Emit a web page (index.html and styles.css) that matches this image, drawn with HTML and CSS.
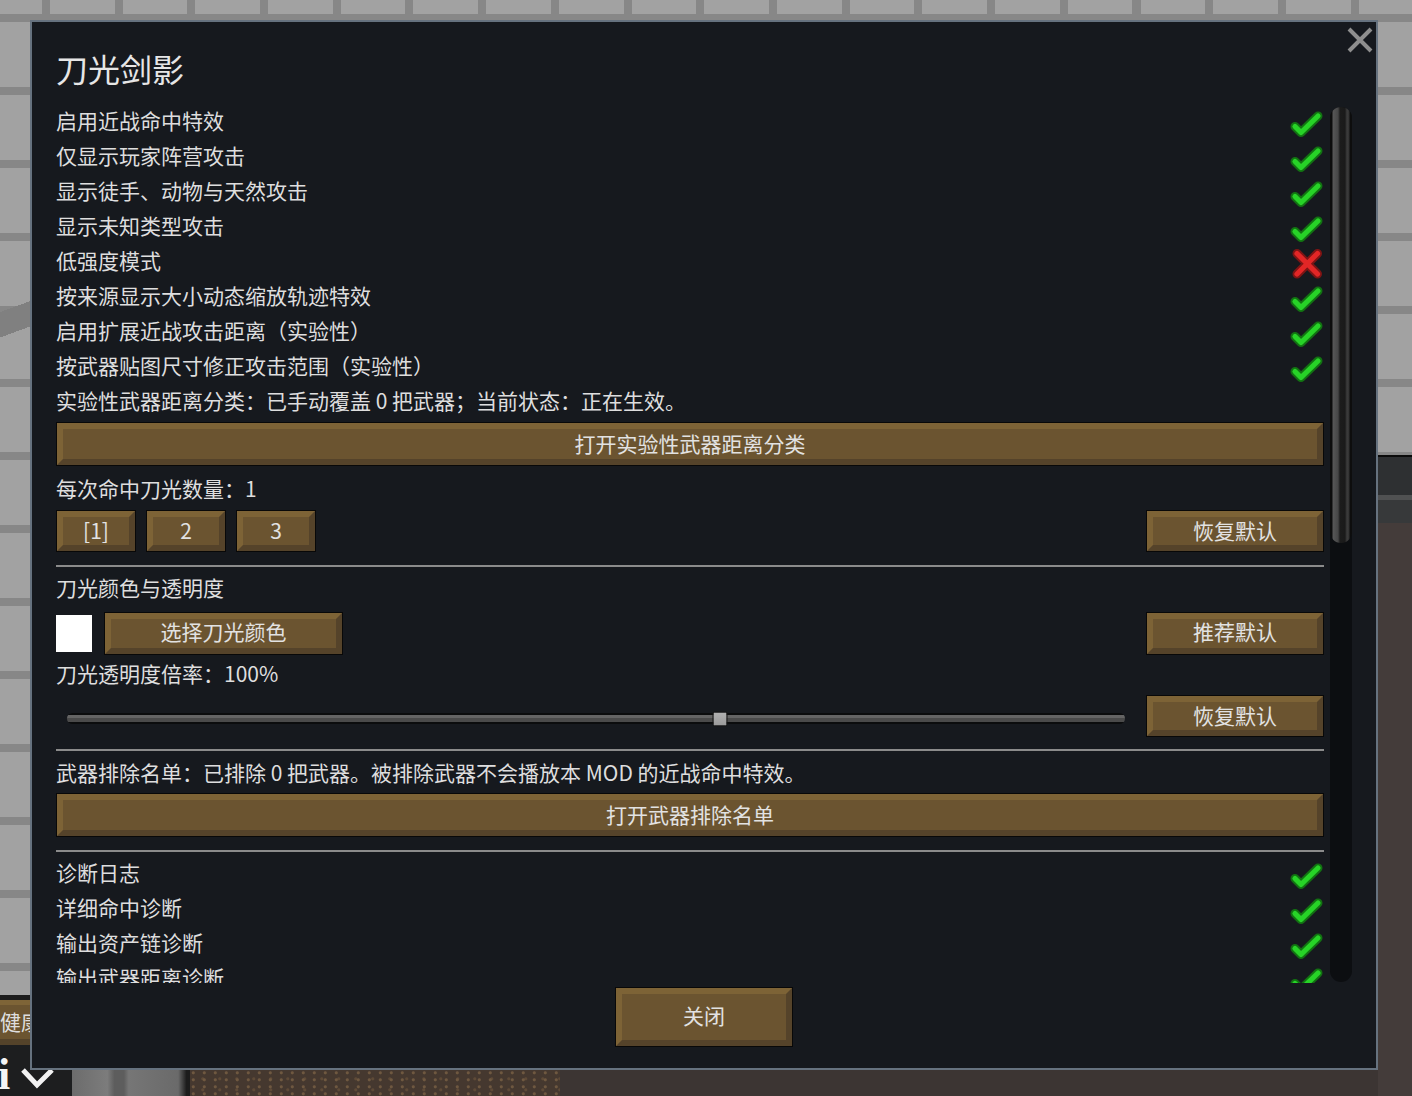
FILE: index.html
```html
<!DOCTYPE html>
<html lang="zh-CN">
<head>
<meta charset="utf-8">
<title>刀光剑影</title>
<link rel="stylesheet" href="styles.css">
</head>
<body>
<svg class="defs" width="0" height="0" aria-hidden="true">
  <defs>
    <symbol id="ico-check" viewBox="0 0 34 34">
      <polyline points="5,20.5 11,26.5 28,10" fill="none" stroke="#127212" stroke-width="9" stroke-linecap="round" stroke-linejoin="round"/>
      <polyline points="5,20.5 11,26.5 28,10" fill="none" stroke="#27d327" stroke-width="5.2" stroke-linecap="round" stroke-linejoin="round"/>
    </symbol>
    <symbol id="ico-cross" viewBox="0 0 34 34">
      <path d="M7 7.5 L27.5 28 M27.5 7.5 L7 28" fill="none" stroke="#7e1414" stroke-width="9" stroke-linecap="round"/>
      <path d="M7 7.5 L27.5 28 M27.5 7.5 L7 28" fill="none" stroke="#e22626" stroke-width="5.2" stroke-linecap="round"/>
    </symbol>
  </defs>
</svg>

<div class="scene">
  <div class="scene-shade"></div>
  <div class="scene-right"></div>
  <div class="scene-health">健康</div>
  <div class="scene-corner">
    <span class="scene-i">i</span>
    <svg class="scene-chevron" viewBox="0 0 36 22"><polyline points="3,2 17,17 32,2" fill="none" stroke="#f2f2f2" stroke-width="5"/></svg>
  </div>
  <div class="scene-floor-gray"></div>
  <div class="scene-floor-brown"></div>
  <div class="scene-floor-dark"></div>
</div>

<div class="window">
  <svg class="close-x" viewBox="0 0 26 26"><path d="M2 2 L24 24 M24 2 L2 24" fill="none" stroke="#8e8e8e" stroke-width="4"/></svg>
  <h1 class="title">刀光剑影</h1>
  <div class="scroll">
    <div class="content">
      <div class="row"><span>启用近战命中特效</span><svg class="mark"><use href="#ico-check"/></svg></div>
      <div class="row"><span>仅显示玩家阵营攻击</span><svg class="mark"><use href="#ico-check"/></svg></div>
      <div class="row"><span>显示徒手、动物与天然攻击</span><svg class="mark"><use href="#ico-check"/></svg></div>
      <div class="row"><span>显示未知类型攻击</span><svg class="mark"><use href="#ico-check"/></svg></div>
      <div class="row"><span>低强度模式</span><svg class="mark"><use href="#ico-cross"/></svg></div>
      <div class="row"><span>按来源显示大小动态缩放轨迹特效</span><svg class="mark"><use href="#ico-check"/></svg></div>
      <div class="row"><span>启用扩展近战攻击距离（实验性）</span><svg class="mark"><use href="#ico-check"/></svg></div>
      <div class="row"><span>按武器贴图尺寸修正攻击范围（实验性）</span><svg class="mark"><use href="#ico-check"/></svg></div>
      <div class="label">实验性武器距离分类：已手动覆盖 0 把武器；当前状态：正在生效。</div>
      <button class="btn btn-wide btn-range">打开实验性武器距离分类</button>

      <div class="label count-label">每次命中刀光数量：1</div>
      <div class="count-row">
        <button class="btn btn-num">[1]</button>
        <button class="btn btn-num">2</button>
        <button class="btn btn-num">3</button>
        <button class="btn btn-side">恢复默认</button>
      </div>

      <div class="sep sep-a"></div>
      <div class="label color-label">刀光颜色与透明度</div>
      <div class="color-row">
        <div class="swatch"></div>
        <button class="btn btn-pick">选择刀光颜色</button>
        <button class="btn btn-side btn-side-tall">推荐默认</button>
      </div>
      <div class="label alpha-label">刀光透明度倍率：100%</div>
      <div class="slider-row">
        <div class="slider">
          <div class="slider-handle" style="left:61.7%"></div>
        </div>
        <button class="btn btn-side">恢复默认</button>
      </div>

      <div class="sep sep-b"></div>
      <div class="label exclude-label">武器排除名单：已排除 0 把武器。被排除武器不会播放本 MOD 的近战命中特效。</div>
      <button class="btn btn-wide btn-exclude">打开武器排除名单</button>

      <div class="sep sep-c"></div>
      <div class="row diag-first"><span>诊断日志</span><svg class="mark"><use href="#ico-check"/></svg></div>
      <div class="row"><span>详细命中诊断</span><svg class="mark"><use href="#ico-check"/></svg></div>
      <div class="row"><span>输出资产链诊断</span><svg class="mark"><use href="#ico-check"/></svg></div>
      <div class="row"><span>输出武器距离诊断</span><svg class="mark"><use href="#ico-check"/></svg></div>
    </div>
    <div class="scrollbar"><div class="thumb"></div></div>
  </div>
  <div class="footer"><button class="btn btn-close">关闭</button></div>
</div>
</body>
</html>
```

FILE: styles.css
```css
* { box-sizing: border-box; }
html, body { margin: 0; padding: 0; }
body {
  width: 1412px;
  height: 1096px;
  overflow: hidden;
  position: relative;
  background-color: #a2a2a2;
  background-image:
    repeating-linear-gradient(to bottom, transparent 0 14px, #878787 14px 22px, transparent 22px 73px),
    repeating-linear-gradient(to right, transparent 0 42px, #878787 42px 50px, transparent 50px 72.7px);
  font-family: "Noto Sans CJK SC", "Noto Sans", sans-serif;
  color: #dedede;
}
.defs { position: absolute; width: 0; height: 0; overflow: hidden; }

/* ---------- backdrop scene ---------- */
.scene { position: absolute; inset: 0; }
.scene-shade {
  position: absolute; left: 0; top: 292px; width: 30px; height: 56px;
  background: linear-gradient(160deg, transparent 0 30%, #808080 30% 68%, transparent 68%);
}
.scene-right {
  position: absolute; left: 1378px; top: 455px; width: 34px; height: 641px;
  background: linear-gradient(to bottom, #0b0b0b 0 2px, #2e3032 2px 40px, #505152 40px 45px, #37393a 45px 68px, #443c3a 68px);
}
.scene-health {
  position: absolute; left: 0; top: 995px; width: 90px; height: 50px;
  border-top: 5px solid #1c1c1c;
  background: linear-gradient(to bottom, #7e6437 0 5px, #6b5430 5px 39px, #54432a 39px);
  color: #dedede; font-size: 21px; line-height: 43px; padding-left: 0;
}
.scene-corner {
  position: absolute; left: 0; top: 1045px; width: 72px; height: 51px;
  background: #1d1e1f;
}
.scene-i {
  position: absolute; left: -2px; top: 8px;
  font-family: "Liberation Serif", serif; font-weight: 700; font-size: 44px; line-height: 1;
  color: #f4f4f4;
}
.scene-chevron { position: absolute; left: 20px; top: 23px; width: 36px; height: 22px; }
.scene-floor-gray {
  position: absolute; left: 72px; top: 1070px; width: 118px; height: 26px;
  background: linear-gradient(to right, #6c6c6c, #7c7c7c 30%, #5d5d5d 36% 44%, #767676 48%, #6a6a6a 90%, #1c1c1c 97%);
}
.scene-floor-brown {
  position: absolute; left: 190px; top: 1070px; width: 370px; height: 26px;
  background-color: #45382f;
  background-image: radial-gradient(circle at 30% 40%, #6f5840 0 1px, transparent 2px),
                    radial-gradient(circle at 75% 80%, #5e4a37 0 1px, transparent 2px);
  background-size: 11px 7px, 17px 11px;
}
.scene-floor-dark {
  position: absolute; left: 560px; top: 1070px; width: 818px; height: 26px;
  background: #3c3533;
}

/* ---------- dialog window ---------- */
.window {
  position: absolute; left: 30px; top: 20px; width: 1348px; height: 1050px;
  background: #16191e;
  border: 2px solid #66727f;
  padding: 0 24px;
  display: flex; flex-direction: column;
}
.close-x { position: absolute; right: 3px; top: 5px; width: 26px; height: 26px; }
.title {
  margin: 26px 0 17px; font-size: 32px; line-height: 40px; font-weight: 400; color: #e6e6e6;
}
.scroll { height: 878px; display: flex; gap: 6px; overflow: hidden; flex: none; }
.content { flex: 1; overflow: hidden; }
.scrollbar {
  width: 22px; height: 875px; margin-top: 2px; flex: none;
  background: #0c0e11; border-radius: 11px;
}
.thumb {
  height: 436px; border-radius: 11px;
  background: linear-gradient(to right, #0d0d0d 0 2px, #575757 3px, #474747 8px, #1c1c1c 10px, #1a1a1a 15px, #3d3d3d 17px, #323232 19px, #0d0d0d 20px 22px);
}

.row {
  display: flex; align-items: center; justify-content: space-between;
  height: 35px; font-size: 21px; line-height: 31px;
}
.row span { padding-bottom: 4px; }
.mark { width: 34px; height: 34px; flex: none; }
.label { height: 35px; font-size: 21px; line-height: 31px; padding-bottom: 4px; white-space: nowrap; }

.btn {
  display: flex; align-items: center; justify-content: center;
  padding: 0 0 3px; margin: 0;
  font-family: inherit; font-size: 21px; color: #e2e2e2;
  background: #6b5430;
  border: 6px solid; border-color: #7d6336 #55432a #55432a #7d6336;
  box-shadow: 0 0 0 1px #080808;
}
.btn-wide { height: 42px; width: calc(100% - 2px); margin-left: 1px; }
.btn-range { margin-top: 3px; }
.count-label { margin-top: 8px; }
.count-row { display: flex; gap: 12px; padding: 0 1px; height: 40px; margin-top: 3px; }
.btn-num { width: 78px; height: 40px; }
.btn-side { width: 176px; height: 40px; margin-left: auto; }
.btn-side-tall { height: 41px; }
.btn-pick, .btn-side-tall { padding-bottom: 5px; }
.sep { height: 2px; background: #8b8b8b; }
.sep-a { margin-top: 14px; }
.color-label { margin-top: 5px; }
.color-row { display: flex; align-items: center; height: 41px; margin-top: 6px; padding-right: 1px; }
.swatch { width: 36px; height: 37px; background: #ffffff; flex: none; }
.btn-pick { width: 237px; height: 41px; margin-left: 13px; }
.alpha-label { margin-top: 4px; }
.slider-row { display: flex; align-items: center; height: 40px; margin-top: 3px; padding: 0 1px 0 11px; }
.slider {
  flex: 1; height: 11px; margin: 5px 22px 0 0; position: relative;
  border-radius: 6px;
  background: linear-gradient(to bottom, #0b0c0d 0 2px, #646464 2px 5px, #4a4a4a 5px 9px, #0b0c0d 9px 11px);
}
.slider-handle {
  position: absolute; top: 50%; width: 15px; height: 15px;
  transform: translate(-50%, -50%);
  background: linear-gradient(to bottom, #b0b0b0, #9a9a9a);
  border: 1px solid #141414; border-radius: 2px;
}
.sep-b { margin-top: 13px; }
.exclude-label { margin-top: 6px; }
.btn-exclude { margin-top: 2px; }
.sep-c { margin-top: 14px; }
.diag-first { margin-top: 5px; }

.footer { display: flex; justify-content: center; padding-top: 5px; }
.btn-close { width: 176px; height: 58px; padding-bottom: 4px; }
```
